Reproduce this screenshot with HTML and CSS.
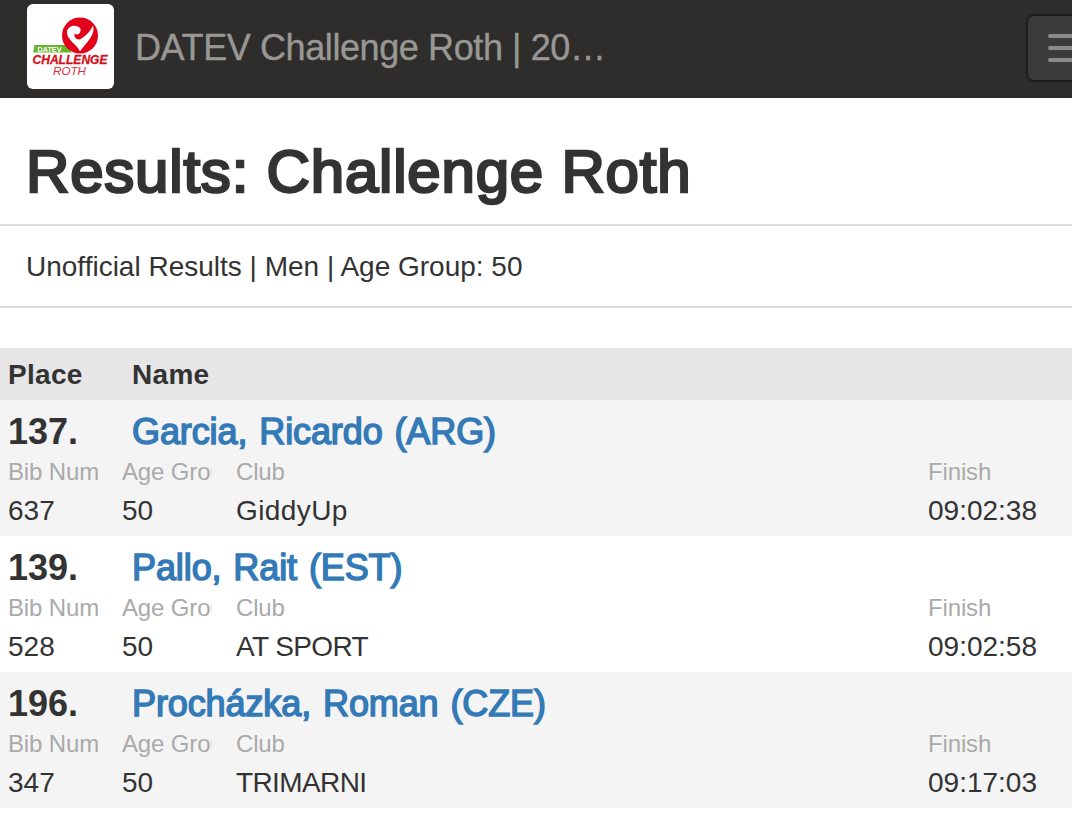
FILE: index.html
```html
<!DOCTYPE html>
<html lang="en">
<head>
  <meta charset="UTF-8" />
  <meta name="viewport" content="width=device-width, initial-scale=1.0"/>
  <title>Results: Challenge Roth</title>
  <link rel="stylesheet" href="styles.css">
</head>
<body>

  <nav class="navbar">
    <svg class="logo" viewBox="0 0 87 85" role="img" aria-label="DATEV Challenge Roth">
      <rect width="87" height="85" rx="6" fill="#fff"/>
      <path d="M7.5 41 H39 L45 48.5 H6 Z" fill="#69b42d"/>
      <circle cx="53" cy="31.5" r="18" fill="#e2001a"/>
      <path d="M53 47.5 C50.5 41 40 36 40 28.5 C40 22 49 19.5 53.5 24.5 C54.5 29 50.5 32 47.5 29.5 C46.5 34 51 37 54.5 34.5 C59 31.5 63 28 66 21.5 C69 31 58 40 53 47.5 Z" fill="#fff"/>
      <text class="logo-datev" x="10.5" y="47.8" textLength="24" lengthAdjust="spacingAndGlyphs">DATEV</text>
      <text class="logo-challenge" x="5.5" y="59.7" textLength="75" lengthAdjust="spacingAndGlyphs">CHALLENGE</text>
      <text class="logo-roth" x="26" y="71" textLength="33" lengthAdjust="spacingAndGlyphs">ROTH</text>
    </svg>
    <a class="brand">DATEV Challenge Roth | 20…</a>
    <button class="menu-btn" aria-label="Menu">
      <span></span>
      <span></span>
      <span></span>
    </button>
  </nav>

  <h1>Results: Challenge Roth</h1>
  <p class="filter">Unofficial Results | Men | Age Group: 50</p>

  <div class="results">
    <div class="head">
      <div>Place</div>
      <div>Name</div>
    </div>

    <div class="entry">
      <div class="title">
        <div class="place">137.</div>
        <a class="name">Garcia, Ricardo (ARG)</a>
      </div>
      <div class="details">
        <div class="field"><small>Bib Number</small>637</div>
        <div class="field"><small>Age Group</small>50</div>
        <div class="field"><small>Club</small><span class="club">GiddyUp</span></div>
        <div class="field"><small>Finish</small>09:02:38</div>
      </div>
    </div>

    <div class="entry">
      <div class="title">
        <div class="place">139.</div>
        <a class="name">Pallo, Rait (EST)</a>
      </div>
      <div class="details">
        <div class="field"><small>Bib Number</small>528</div>
        <div class="field"><small>Age Group</small>50</div>
        <div class="field"><small>Club</small><span class="club caps">AT SPORT</span></div>
        <div class="field"><small>Finish</small>09:02:58</div>
      </div>
    </div>

    <div class="entry">
      <div class="title">
        <div class="place">196.</div>
        <a class="name">Procházka, Roman (CZE)</a>
      </div>
      <div class="details">
        <div class="field"><small>Bib Number</small>347</div>
        <div class="field"><small>Age Group</small>50</div>
        <div class="field"><small>Club</small><span class="club caps">TRIMARNI</span></div>
        <div class="field"><small>Finish</small>09:17:03</div>
      </div>
    </div>
  </div>

</body>
</html>
```
FILE: styles.css
```css
* {
  box-sizing: border-box;
}

body {
  margin: 0;
  font-family: "Liberation Sans", Arial, sans-serif;
  font-size: 28px;
  line-height: 40px;
  color: #333;
  background-color: #fff;
  overflow: hidden;
}

.navbar {
  display: flex;
  align-items: flex-start;
  height: 98px;
  padding: 4px 0 0 27px;
  background-color: #2e2d2b;
}

.logo {
  flex: none;
  width: 87px;
  height: 85px;
}

.logo-datev {
  font-size: 8px;
  font-weight: bold;
  fill: #fff;
}

.logo-challenge {
  font-size: 12px;
  font-weight: bold;
  font-style: italic;
  fill: #d5101c;
  stroke: #d5101c;
  stroke-width: 0.3px;
}

.logo-roth {
  font-size: 11px;
  font-style: italic;
  fill: #d5303a;
}

.brand {
  margin: 24px 0 0 21px;
  font-size: 36px;
  letter-spacing: -0.4px;
  color: #999794;
  -webkit-text-stroke: 0.4px #999794;
  white-space: nowrap;
}

.menu-btn {
  display: flex;
  flex: none;
  flex-direction: column;
  gap: 8px;
  width: 88px;
  height: 68px;
  margin: 10px -42px 0 auto;
  padding: 18px 20px;
  background-color: #3c3b39;
  border: 2px solid #1f1e1d;
  border-radius: 8px;
}

.menu-btn span {
  width: 44px;
  height: 4px;
  background-color: #8b8a88;
  border-radius: 2px;
}

h1 {
  height: 128px;
  margin: 0;
  padding: 41px 26px 0;
  font-size: 60px;
  font-weight: normal;
  line-height: 66px;
  letter-spacing: 0.8px;
  -webkit-text-stroke: 2.6px #333;
  border-bottom: 2px solid #ddd;
}

.filter {
  height: 82px;
  margin: 0 0 40px;
  padding: 21px 26px 0;
  border-bottom: 2px solid #ddd;
}

.head {
  display: grid;
  grid-template-columns: 124px 1fr;
  height: 52px;
  padding: 7px 8px 0;
  font-weight: bold;
  letter-spacing: 0.3px;
  background-color: #e6e6e6;
}

.entry {
  height: 136px;
  padding: 8px 8px 0;
}

.entry:nth-child(even) {
  background-color: #f4f4f4;
}

.title {
  display: grid;
  grid-template-columns: 124px 1fr;
  height: 48px;
  font-size: 36px;
  line-height: 48px;
}

.place {
  font-weight: bold;
}

.name {
  color: #337ab7;
  letter-spacing: -0.1px;
  word-spacing: 2px;
  -webkit-text-stroke: 1.5px #337ab7;
}

.details {
  display: grid;
  grid-template-columns: 90px 90px 668px 136px;
  column-gap: 24px;
}

.field {
  overflow: hidden;
  white-space: nowrap;
}

.field small {
  display: block;
  height: 35px;
  font-size: 24px;
  line-height: 32px;
  letter-spacing: -0.15px;
  color: #aaa;
}

.club {
  letter-spacing: 0.4px;
}

.caps {
  letter-spacing: -0.6px;
}
```
